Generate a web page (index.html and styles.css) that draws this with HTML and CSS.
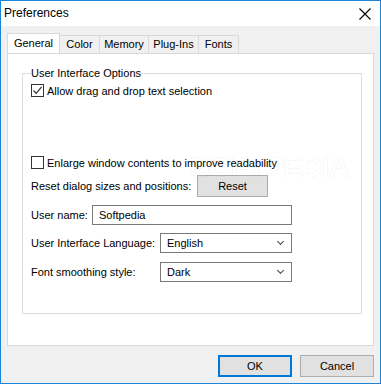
FILE: index.html
```html
<!DOCTYPE html>
<html lang="en">
<head>
    <meta charset="UTF-8">
    <title>Preferences</title>
    <link rel="stylesheet" href="styles.css">
</head>
<body>
    <div class="window">
        <div class="titlebar">
            <span class="title">Preferences</span>
            <svg class="close" width="12" height="12" viewBox="0 0 12 12">
                <path d="M0.5 0.5 L11.5 11.5 M11.5 0.5 L0.5 11.5" stroke="#000" stroke-width="1.1" fill="none"/>
            </svg>
        </div>

        <div class="content">
            <div class="tabs">
                <div class="tab active">General</div>
                <div class="tab">Color</div>
                <div class="tab">Memory</div>
                <div class="tab">Plug-Ins</div>
                <div class="tab">Fonts</div>
            </div>

            <div class="panel">
                <fieldset class="group">
                    <legend>User Interface Options</legend>

                    <label class="check-row first">
                        <span class="checkbox">
                            <svg width="11" height="11" viewBox="0 0 11 11">
                                <path d="M1.5 5.5 L4.2 8.3 L9.6 1.8" stroke="#333" stroke-width="1.2" fill="none"/>
                            </svg>
                        </span>
                        Allow drag and drop text selection
                    </label>

                    <label class="check-row second">
                        <span class="checkbox"></span>
                        Enlarge window contents to improve readability
                    </label>

                    <div class="row reset-row">
                        <span class="label reset-label">Reset dialog sizes and positions:</span>
                        <button class="btn reset">Reset</button>
                    </div>

                    <div class="row">
                        <span class="label name-label">User name:</span>
                        <div class="textbox">Softpedia</div>
                    </div>

                    <div class="row">
                        <span class="label combo-label">User Interface Language:</span>
                        <div class="combo">English<span class="chev"></span></div>
                    </div>

                    <div class="row font-row">
                        <span class="label combo-label">Font smoothing style:</span>
                        <div class="combo">Dark<span class="chev"></span></div>
                    </div>
                </fieldset>
                <span class="watermark">SOFTPEDIA</span>
            </div>

            <div class="buttons">
                <button class="btn ok">OK</button>
                <button class="btn">Cancel</button>
            </div>
        </div>
    </div>
</body>
</html>
```

FILE: styles.css
```css
body {
    margin: 0;
    font-family: "Liberation Sans", Arial, sans-serif;
    font-size: 11px;
    color: #000;
    background: #fff;
}

.window {
    width: 381px;
    height: 384px;
    box-sizing: border-box;
    border: 1px solid #1c84d8;
    display: flex;
    flex-direction: column;
    background-color: #f0f0f0;
}

.titlebar {
    height: 25px;
    background-color: #fff;
    display: flex;
    align-items: center;
    justify-content: space-between;
    padding: 0 9px 0 3px;
}

.title {
    font-size: 12px;
    margin-top: -1px;
}

.close {
    margin-top: 1px;
}

.content {
    flex: 1;
    padding: 7px 6px 0 6px;
    display: flex;
    flex-direction: column;
}

.tabs {
    display: flex;
    align-items: flex-end;
    height: 20px;
    position: relative;
    z-index: 1;
}

.tab {
    height: 18px;
    box-sizing: border-box;
    border: 1px solid #d9d9d9;
    border-bottom: none;
    border-left: none;
    padding: 2px 0 0 0;
    text-align: center;
    background-color: #f0f0f0;
    white-space: nowrap;
}

.tab.active {
    height: 20px;
    border-left: 1px solid #d9d9d9;
    background-color: #fff;
    width: 53px;
    padding-top: 3px;
}

.tab:nth-child(2) { width: 40px; }
.tab:nth-child(3) { width: 49px; }
.tab:nth-child(4) { width: 50px; }
.tab:nth-child(5) { width: 40px; }

.panel {
    height: 293px;
    box-sizing: border-box;
    border: 1px solid #d9d9d9;
    background-color: #fff;
    position: relative;
    overflow: hidden;
}

.group {
    margin: 13px 11px 0 14px;
    padding: 0 8px;
    height: 247px;
    box-sizing: border-box;
    border: 1px solid #dcdcdc;
    display: flex;
    flex-direction: column;
}

.group legend {
    padding: 0;
    margin-left: 0;
    font-size: 11px;
}

.check-row {
    display: flex;
    align-items: center;
    height: 13px;
    white-space: nowrap;
}

.check-row.first {
    margin-top: 5px;
}

.check-row.second {
    margin-top: 59px;
}

.checkbox {
    width: 13px;
    height: 13px;
    box-sizing: border-box;
    border: 1px solid #333;
    margin-right: 3px;
    display: flex;
    align-items: center;
    justify-content: center;
    background: #fff;
}

.row {
    display: flex;
    align-items: center;
    margin-top: 8px;
}

.reset-row {
    margin-top: 6px;
}

.font-row {
    margin-top: 9px;
}

.label {
    flex-shrink: 0;
    white-space: nowrap;
}

.reset-label {
    width: 166px;
}

.name-label {
    width: 61px;
}

.combo-label {
    width: 129px;
}

.btn {
    font-family: "Liberation Sans", Arial, sans-serif;
    font-size: 11px;
    width: 74px;
    height: 22px;
    box-sizing: border-box;
    background-color: #e1e1e1;
    border: 1px solid #adadad;
    padding: 0;
    color: #000;
}

.reset {
    width: 71px;
}

.textbox,
.combo {
    height: 20px;
    box-sizing: border-box;
    border: 1px solid #7a7a7a;
    display: flex;
    align-items: center;
    padding-left: 6px;
    background: #fff;
}

.textbox {
    width: 200px;
}

.combo {
    width: 132px;
    position: relative;
}

.chev {
    position: absolute;
    right: 8px;
    top: 5px;
    width: 4px;
    height: 4px;
    border-right: 1px solid #444;
    border-bottom: 1px solid #444;
    transform: rotate(45deg);
}

.watermark {
    position: absolute;
    left: 182px;
    top: 96px;
    font-family: "Liberation Sans", Arial, sans-serif;
    font-size: 30px;
    font-weight: bold;
    letter-spacing: -1.5px;
    color: rgba(255, 255, 255, 0);
    -webkit-text-stroke: 1px rgba(0, 0, 0, 0.05);
    pointer-events: none;
}

.buttons {
    display: flex;
    justify-content: flex-end;
    gap: 8px;
    margin-top: 9px;
}

.ok {
    border: 2px solid #0078d7;
}
```
